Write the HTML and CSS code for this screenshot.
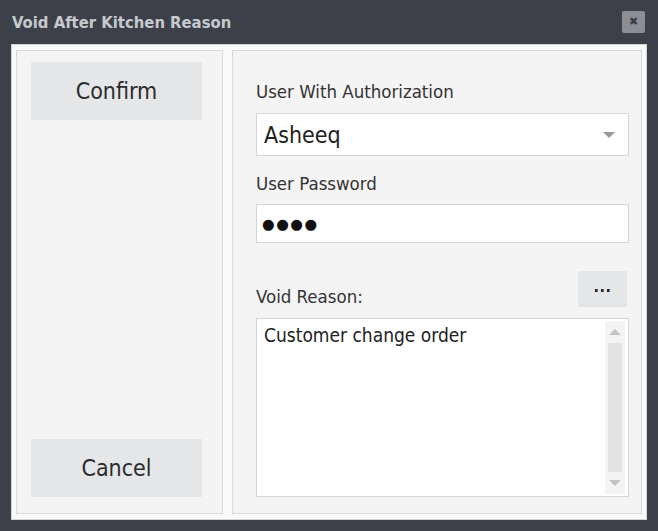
FILE: index.html
```html
<!DOCTYPE html>
<html lang="en">
<head>
  <meta charset="UTF-8" />
  <title>Void After Kitchen Reason</title>
  <link rel="stylesheet" href="styles.css">
</head>
<body>

  <!-- Title bar -->
  <div class="titlebar">
    <div class="title">Void After Kitchen Reason</div>
    <div class="close">&#x2716;</div>
  </div>

  <!-- Client area -->
  <div class="client">

    <div class="panel side">
      <button class="btn big">Confirm</button>
      <button class="btn big">Cancel</button>
    </div>

    <div class="panel form">
      <div class="label">User With Authorization</div>
      <div class="combo">
        <span>Asheeq</span>
        <span class="arrow"></span>
      </div>

      <div class="label pw-label">User Password</div>
      <div class="field">&#x25CF;&#x25CF;&#x25CF;&#x25CF;</div>

      <div class="reason-row">
        <div class="label">Void Reason:</div>
        <button class="btn more">...</button>
      </div>
      <div class="memo">
        <div class="memo-text">Customer change order</div>
        <div class="scroll">
          <span class="up"></span>
          <span class="thumb"></span>
          <span class="down"></span>
        </div>
      </div>
    </div>

  </div>

</body>
</html>
```

FILE: styles.css
```css
body {
  margin: 0;
  width: 658px;
  height: 531px;
  background-color: #3d4049;
  font-family: "DejaVu Sans", Verdana, sans-serif;
  font-stretch: condensed;
  color: #2e2e2e;
}

/* TITLE BAR */
.titlebar {
  height: 44px;
  display: flex;
  align-items: center;
  justify-content: space-between;
  padding: 0 13px 0 12px;
}

.title {
  font-size: 16.5px;
  font-weight: bold;
  color: #c6cace;
}

.close {
  width: 23px;
  height: 22px;
  margin-top: -1px;
  border-radius: 2px;
  background-color: #8b8e93;
  color: #3a3d44;
  font-size: 11px;
  font-stretch: normal;
  display: flex;
  align-items: center;
  justify-content: center;
}

/* CLIENT */
.client {
  margin-left: 11px;
  width: 626px;
  height: 465px;
  padding: 5px 4px 4px 4px;
  border: 1px solid #d4d4d4;
  background-color: #fafafa;
  display: flex;
  gap: 9px;
}

.panel {
  border: 1px solid #d9d9d9;
  background-color: #f4f4f4;
  box-sizing: border-box;
  height: 464px;
}

.btn {
  border: none;
  background-color: #e4e6e7;
  font-family: inherit;
  font-stretch: condensed;
  color: #2b2b2b;
  padding: 0;
}

/* LEFT PANEL */
.side {
  width: 207px;
  padding: 11px 0 16px 14px;
  display: flex;
  flex-direction: column;
  justify-content: space-between;
}

.big {
  width: 171px;
  height: 58px;
  font-size: 23px;
}

/* FORM PANEL */
.form {
  width: 410px;
  padding: 30px 12px 15px 23px;
}

.label {
  font-size: 18.5px;
  line-height: 22px;
  color: #333;
}

.combo {
  margin-top: 10px;
  height: 43px;
  box-sizing: border-box;
  border: 1px solid #d5d5d5;
  background-color: #fff;
  display: flex;
  align-items: center;
  justify-content: space-between;
  padding: 0 13px 0 7px;
  font-size: 23px;
  color: #222;
}

.arrow {
  width: 0;
  height: 0;
  border-left: 6px solid transparent;
  border-right: 6px solid transparent;
  border-top: 6px solid #9a9a9a;
}

.pw-label {
  margin-top: 17px;
}

.field {
  margin-top: 9px;
  height: 39px;
  box-sizing: border-box;
  border: 1px solid #d5d5d5;
  background-color: #fff;
  padding: 0 5px;
  display: flex;
  align-items: center;
  font-size: 14.5px;
  font-stretch: normal;
  letter-spacing: 1.5px;
  color: #111;
}

.reason-row {
  margin-top: 28px;
  display: flex;
  align-items: flex-end;
  justify-content: space-between;
}

.reason-row .label {
  line-height: 20px;
}

.more {
  width: 49px;
  height: 36px;
  margin-right: 2px;
  padding-bottom: 6px;
  font-size: 16px;
  font-weight: bold;
  letter-spacing: 0.5px;
  color: #222;
}

.memo {
  margin-top: 11px;
  height: 179px;
  box-sizing: border-box;
  border: 1px solid #d5d5d5;
  background-color: #fff;
  display: flex;
  justify-content: space-between;
}

.memo-text {
  padding: 5px 7px;
  font-size: 19px;
  color: #222;
}

.scroll {
  width: 20px;
  margin: 2px 3px 2px 0;
  background-color: #f3f3f3;
  display: flex;
  flex-direction: column;
  align-items: center;
}

.up,
.down {
  width: 0;
  height: 0;
  border-left: 6px solid transparent;
  border-right: 6px solid transparent;
  margin: 8px 0;
}

.up {
  border-bottom: 6px solid #c4c4c4;
}

.down {
  border-top: 6px solid #c4c4c4;
}

.thumb {
  flex: 1;
  width: 14px;
  background-color: #e3e3e3;
}
```
